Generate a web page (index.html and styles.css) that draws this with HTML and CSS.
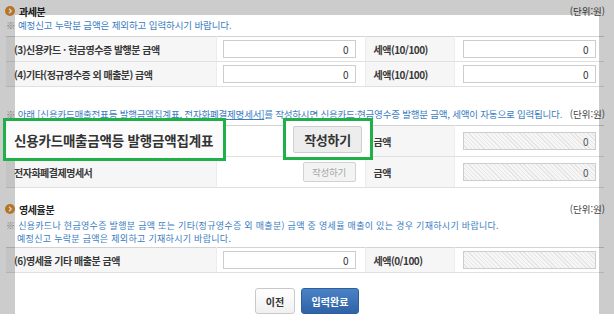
FILE: index.html
```html
<!DOCTYPE html>
<html lang="ko">
<head>
  <meta charset="UTF-8">
  <title>매출 금액 입력</title>
  <link rel="stylesheet" href="styles.css">
</head>
<body>
  <div class="page">
    <div class="sec-head">
      <span class="sec-title">
        <svg class="bullet" width="10" height="10" viewBox="0 0 10 10"><circle cx="5" cy="5" r="5" fill="#e4922e"/><path d="M4 2.8 L6.2 5 L4 7.2" fill="none" stroke="#fff" stroke-width="1.6"/></svg>
        과세분
      </span>
      <span class="unit">(단위:원)</span>
    </div>
    <p class="note"><span class="mark">※</span> 예정신고 누락분 금액은 제외하고 입력하시기 바랍니다.</p>
    <table class="grid">
      <colgroup><col class="c1"><col class="c2"><col class="c3"><col class="c4"></colgroup>
      <tr>
        <th>(3)신용카드 · 현금영수증 발행분 금액</th>
        <td class="in-l"><input type="text" value="0" readonly></td>
        <th class="sub">세액(10/100)</th>
        <td class="in-r"><input type="text" value="0" readonly></td>
      </tr>
      <tr>
        <th>(4)기타(정규영수증 외 매출분) 금액</th>
        <td class="in-l"><input type="text" value="0" readonly></td>
        <th class="sub">세액(10/100)</th>
        <td class="in-r"><input type="text" value="0" readonly></td>
      </tr>
    </table>

    <div class="note-row">
      <p class="note"><span class="mark">※</span> 아래 <u>[신용카드매출전표등 발행금액집계표, 전자화폐결제명세서]</u>를 작성하시면 신용카드·현금영수증 발행분 금액, 세액이 자동으로 입력됩니다.</p>
      <span class="unit">(단위:원)</span>
    </div>
    <table class="grid tall">
      <colgroup><col class="c1"><col class="c2"><col class="c3"><col class="c4"></colgroup>
      <tr>
        <!-- row 1 is shown enlarged in the callouts below -->
        <th></th>
        <td class="btn-cell"></td>
        <th class="sub">금액</th>
        <td class="in-r"><input type="text" class="hatch" value="0" disabled></td>
      </tr>
      <tr>
        <th>전자화폐결제명세서</th>
        <td class="btn-cell"><button class="btn-sm">작성하기</button></td>
        <th class="sub">금액</th>
        <td class="in-r"><input type="text" class="hatch" value="0" disabled></td>
      </tr>
    </table>

    <div class="sec-head second">
      <span class="sec-title">
        <svg class="bullet" width="10" height="10" viewBox="0 0 10 10"><circle cx="5" cy="5" r="5" fill="#e4922e"/><path d="M4 2.8 L6.2 5 L4 7.2" fill="none" stroke="#fff" stroke-width="1.6"/></svg>
        영세율분
      </span>
      <span class="unit">(단위:원)</span>
    </div>
    <p class="note hang"><span class="mark">※</span> 신용카드나 현금영수증 발행분 금액 또는 기타(정규영수증 외 매출분) 금액 중 영세율 매출이 있는 경우 기재하시기 바랍니다.<br>예정신고 누락분 금액은 제외하고 기재하시기 바랍니다.</p>
    <table class="grid last">
      <colgroup><col class="c1"><col class="c2"><col class="c3"><col class="c4"></colgroup>
      <tr>
        <th>(6)영세율 기타 매출분 금액</th>
        <td class="in-l"><input type="text" value="0" readonly></td>
        <th class="sub">세액(0/100)</th>
        <td class="in-r"><input type="text" class="hatch" value="" disabled></td>
      </tr>
    </table>

    <div class="actions">
      <button class="btn-prev">이전</button>
      <button class="btn-done">입력완료</button>
    </div>
  </div>

  <div class="spot"></div>

  <div class="callout call-title">신용카드매출금액등 발행금액집계표</div>
  <div class="callout call-btn"><button class="btn-big">작성하기</button></div>
</body>
</html>
```

FILE: styles.css
```css
body {
  margin: 0;
  background-color: #fff;
  color: #333;
  font-family: "Noto Sans CJK KR", "Noto Sans", sans-serif;
  font-size: 10px;
  position: relative;
  overflow: hidden;
}
.page {
  width: 598px;
  margin-left: 6px;
}
.sec-head {
  display: flex;
  justify-content: space-between;
  align-items: center;
  height: 22px;
}
.sec-head.second {
  margin-top: 10px;
}
.sec-title {
  display: flex;
  align-items: center;
  gap: 4px;
  margin-left: -1px;
  font-size: 10px;
  font-weight: bold;
  letter-spacing: -0.4px;
  color: #222;
}
.unit {
  font-size: 9.5px;
  color: #444;
  margin-right: -1px;
}
.note {
  margin: -3px 0 0;
  font-size: 9.5px;
  line-height: 12px;
  letter-spacing: -0.12px;
  color: #3a7dc1;
}
.note .mark {
  color: #9a9a9a;
}
.note.hang {
  margin-top: -1px;
  padding-left: 11px;
  text-indent: -11px;
  font-size: 9px;
  line-height: 13px;
  letter-spacing: 0.3px;
}
.note-row {
  display: flex;
  justify-content: space-between;
  align-items: center;
  margin-top: 20px;
}
.note-row .note {
  margin: 0;
  letter-spacing: -0.2px;
}
.grid {
  width: 598px;
  table-layout: fixed;
  border-collapse: collapse;
  border-top: 1px solid #d3d3d3;
  margin-top: 5px;
}
.grid.tall {
  margin-top: 4px;
}
.grid.last {
  margin-top: 2px;
}
.grid .c1 { width: 210px; }
.grid .c2 { width: 149px; }
.grid .c3 { width: 89px; }
.grid .c4 { width: 150px; }
.grid th,
.grid td {
  height: 24px;
  padding: 0;
  border-bottom: 1px solid #e0e0e0;
}
.grid.tall th,
.grid.tall td {
  height: 30px;
}
.grid th {
  background-color: #f6f6f6;
  text-align: left;
  padding-left: 8px;
  font-size: 10px;
  letter-spacing: -0.5px;
  color: #383838;
  white-space: nowrap;
}
.grid td,
.grid th.sub {
  border-left: 1px solid #ececec;
}
.grid td.in-l {
  padding-left: 6px;
}
.grid td.in-r {
  padding-left: 8px;
}
.grid td.btn-cell {
  text-align: right;
  padding-right: 9px;
}
.grid input {
  display: block;
  width: 133px;
  height: 18px;
  box-sizing: border-box;
  border: 1px solid #cdcdcd;
  padding: 0 6px;
  text-align: right;
  font-family: inherit;
  font-size: 10px;
  color: #333;
  background-color: #fff;
}
.grid input.hatch {
  color: #555;
  background: repeating-linear-gradient(45deg, #f6f6f6 0 2px, #e6e6e6 2px 3px);
}
.btn-sm {
  width: 53px;
  height: 20px;
  border: 1px solid #d2d2d2;
  border-radius: 2px;
  background-color: #f3f3f3;
  color: #a5a5a5;
  font-family: inherit;
  font-size: 9.5px;
  letter-spacing: -0.3px;
  padding: 0;
  vertical-align: middle;
}
.actions {
  display: flex;
  justify-content: center;
  gap: 6px;
  margin-top: 15px;
  margin-left: -6px;
  width: 614px;
}
.btn-prev,
.btn-done {
  height: 26px;
  border-radius: 3px;
  font-family: inherit;
  font-size: 10px;
  font-weight: bold;
  padding: 0;
}
.btn-prev {
  width: 40px;
  border: 1px solid #c9c9c9;
  background: linear-gradient(#ffffff, #f0f0f0);
  color: #333;
}
.btn-done {
  width: 58px;
  border: 1px solid #2d5e9e;
  background: linear-gradient(#4b82c6, #2f62a6);
  color: #fff;
}
.spot {
  position: absolute;
  left: 15px;
  top: 15px;
  width: 584px;
  height: 299px;
  box-shadow: 0 0 0 700px rgba(0, 0, 0, 0.2);
  pointer-events: none;
}
.callout {
  position: absolute;
  top: 118px;
  height: 43px;
  box-sizing: border-box;
  border: 3px solid #20b04a;
  background-color: #fbfbfb;
  display: flex;
  align-items: center;
}
.call-title {
  left: 3px;
  width: 223px;
  padding-left: 8px;
  font-size: 13.5px;
  font-weight: bold;
  letter-spacing: -0.2px;
  color: #333;
}
.call-btn {
  left: 283px;
  width: 90px;
  height: 42px;
  padding-left: 7px;
  background-color: #fff;
}
.btn-big {
  width: 69px;
  height: 27px;
  border: 1px solid #cfcfcf;
  border-radius: 2px;
  background-color: #ededed;
  color: #333;
  font-family: inherit;
  font-size: 13px;
  font-weight: bold;
  letter-spacing: -0.3px;
  padding: 0;
}
```
